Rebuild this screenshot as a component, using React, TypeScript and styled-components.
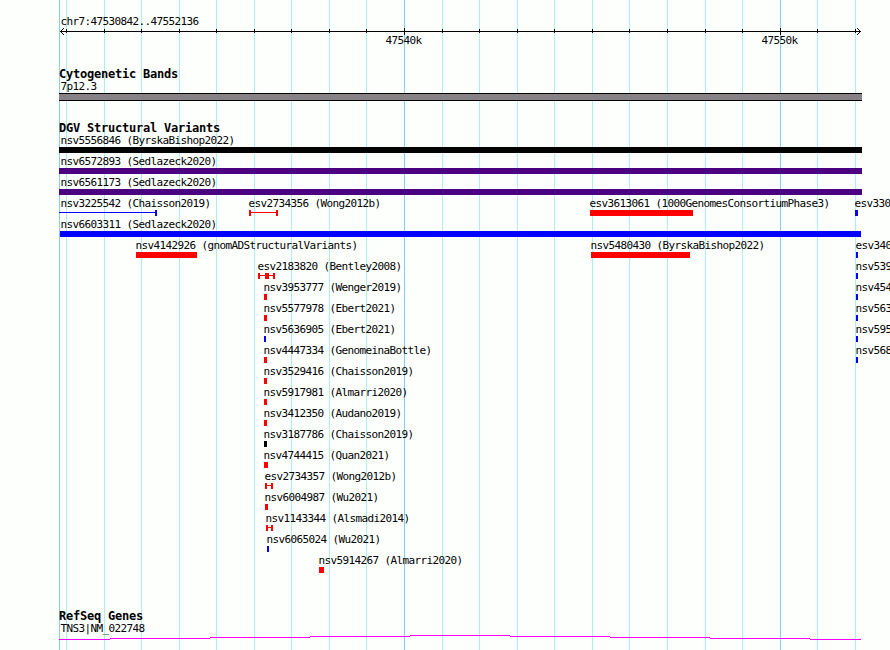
import React from 'react'
import styled, { createGlobalStyle } from 'styled-components'

type Glyph = 'box' | 'span' | 'open'

interface Feature {
  name: string
  start: number
  end: number
  color: string
  glyph?: Glyph
  core?: number
  labelAt?: number
}

const RED = '#ff0000'
const BLUE = '#0000ff'
const INDIGO = '#4b0082'
const BLACK = '#000000'

const minorLines = [
  66, 104, 141, 179, 216, 254, 291, 329, 366, 442, 479,
  517, 554, 592, 629, 667, 705, 742, 817, 855
]
const majorLines = [404, 780]

const lanes: Feature[][] = [
  [{ name: 'nsv5556846 (ByrskaBishop2022)', start: 59, end: 862, color: BLACK, labelAt: 61 }],
  [{ name: 'nsv6572893 (Sedlazeck2020)', start: 59, end: 862, color: INDIGO, labelAt: 61 }],
  [{ name: 'nsv6561173 (Sedlazeck2020)', start: 59, end: 862, color: INDIGO, labelAt: 61 }],
  [
    { name: 'nsv3225542 (Chaisson2019)', start: 59, end: 157, color: BLUE, glyph: 'open', labelAt: 61 },
    { name: 'esv2734356 (Wong2012b)', start: 249, end: 278, color: RED, glyph: 'span' },
    { name: 'esv3613061 (1000GenomesConsortiumPhase3)', start: 590, end: 693, color: RED },
    { name: 'esv330', start: 855, end: 858, color: BLUE }
  ],
  [{ name: 'nsv6603311 (Sedlazeck2020)', start: 60, end: 861, color: BLUE, labelAt: 61 }],
  [
    { name: 'nsv4142926 (gnomADStructuralVariants)', start: 136, end: 197, color: RED },
    { name: 'nsv5480430 (ByrskaBishop2022)', start: 591, end: 690, color: RED },
    { name: 'esv340', start: 856, end: 858, color: BLUE }
  ],
  [
    { name: 'esv2183820 (Bentley2008)', start: 258, end: 275, color: RED, glyph: 'span', core: 4 },
    { name: 'nsv539', start: 856, end: 858, color: BLUE }
  ],
  [
    { name: 'nsv3953777 (Wenger2019)', start: 264, end: 267, color: RED },
    { name: 'nsv454', start: 856, end: 858, color: BLUE }
  ],
  [
    { name: 'nsv5577978 (Ebert2021)', start: 264, end: 267, color: RED },
    { name: 'nsv563', start: 856, end: 858, color: BLUE }
  ],
  [
    { name: 'nsv5636905 (Ebert2021)', start: 264, end: 266, color: BLUE },
    { name: 'nsv595', start: 856, end: 858, color: BLUE }
  ],
  [
    { name: 'nsv4447334 (GenomeinaBottle)', start: 264, end: 267, color: RED },
    { name: 'nsv568', start: 856, end: 858, color: BLUE }
  ],
  [{ name: 'nsv3529416 (Chaisson2019)', start: 264, end: 267, color: RED }],
  [{ name: 'nsv5917981 (Almarri2020)', start: 264, end: 267, color: RED }],
  [{ name: 'nsv3412350 (Audano2019)', start: 264, end: 267, color: RED }],
  [{ name: 'nsv3187786 (Chaisson2019)', start: 264, end: 267, color: BLACK }],
  [{ name: 'nsv4744415 (Quan2021)', start: 264, end: 268, color: RED }],
  [{ name: 'esv2734357 (Wong2012b)', start: 265, end: 273, color: RED, glyph: 'span' }],
  [{ name: 'nsv6004987 (Wu2021)', start: 265, end: 268, color: RED }],
  [{ name: 'nsv1143344 (Alsmadi2014)', start: 266, end: 273, color: RED, glyph: 'span' }],
  [{ name: 'nsv6065024 (Wu2021)', start: 267, end: 269, color: BLUE }],
  [{ name: 'nsv5914267 (Almarri2020)', start: 319, end: 324, color: RED }]
]

const Gridlines = () => (
  <GridSvg width="890" height="650" shapeRendering="crispEdges">
    {minorLines.map(x => <rect key={x} x={x} y="0" width="1" height="650" fill="#afeeee" />)}
    {[59, ...majorLines].map(x => <rect key={x} x={x} y="0" width="1" height="650" fill="#87ceeb" />)}
  </GridSvg>
)

const Scale = () => (
  <ScaleSvg width="890" height="9" shapeRendering="crispEdges">
    <rect x="60" y="4" width="801" height="1" />
    {minorLines.map(x => <rect key={x} x={x} y="2" width="1" height="4" />)}
    {majorLines.map(x => <rect key={x} x={x} y="1" width="1" height="7" />)}
    {[1, 2, 3].map(d => (
      <React.Fragment key={d}>
        <rect x={60 + d} y={4 - d} width="1" height="1" />
        <rect x={60 + d} y={4 + d} width="1" height="1" />
        <rect x={860 - d} y={4 - d} width="1" height="1" />
        <rect x={860 - d} y={4 + d} width="1" height="1" />
      </React.Fragment>
    ))}
  </ScaleSvg>
)

const FeatureGlyph = ({ feature }: { feature: Feature }) => {
  const { start, end, color, glyph = 'box', core } = feature
  if (glyph === 'box') return <Bar $width={end - start} $color={color} />
  return (
    <Span $width={end - start} $color={color}>
      {glyph === 'span' ? <Bar $width={2} $color={color} /> : <i />}
      {core && <Bar $width={core} $color={color} />}
      <Bar $width={2} $color={color} />
    </Span>
  )
}

const App = () => (
  <>
    <GlobalStyle />
    <Browser>
      <Gridlines />
      <Tracks>
        <Ruler>
          <Label $x={60.4}>chr7:47530842..47552136</Label>
          <Scale />
          <ScaleLabels>
            <Label $x={385.4}>47540k</Label>
            <Label $x={761.4}>47550k</Label>
          </ScaleLabels>
        </Ruler>
        <Track $height={54}>
          <Title>Cytogenetic Bands</Title>
          <Label $x={60.4}>7p12.3</Label>
          <Band />
        </Track>
        <Track $height={488}>
          <Title>DGV Structural Variants</Title>
          {lanes.map((lane, key) => (
            <Lane key={key}>
              {lane.map(feature => (
                <FeatureItem key={feature.name} $x={feature.start}>
                  <Label $x={(feature.labelAt ?? feature.start) - feature.start - 0.6}>
                    {feature.name}
                  </Label>
                  <FeatureGlyph feature={feature} />
                </FeatureItem>
              ))}
            </Lane>
          ))}
        </Track>
        <Track $height={40}>
          <Title>RefSeq Genes</Title>
          <Label $x={60.4}>TNS3|NM_022748</Label>
          <GeneSvg width="890" height="5" shapeRendering="crispEdges">
            {[0, 1, 2, 3, 4, 3, 2, 1, 0].map((rise, i) => {
              const from = i === 0 ? 59 : 10 + i * 100
              const to = i === 8 ? 861 : 110 + i * 100
              return <rect key={i} x={from} y={4 - rise} width={to - from} height="1" fill="#ff00ff" />
            })}
          </GeneSvg>
        </Track>
      </Tracks>
    </Browser>
  </>
)

export default App

const GlobalStyle = createGlobalStyle`
  * {
    box-sizing: border-box;
  }
  body {
    margin: 0;
    background: #fdfffc;
    overflow: hidden;
  }
`
const Browser = styled.div`
  display: grid;
  width: 890px;
  height: 650px;
  overflow: hidden;
  color: #000;
  font-family: 'DejaVu Sans Mono', monospace;
`
const GridSvg = styled.svg`
  grid-area: 1 / 1;
  display: block;
`
const Tracks = styled.div`
  grid-area: 1 / 1;
  min-width: 0;
  padding-top: 16px;
`
const Ruler = styled.div`
  height: 52px;
`
const ScaleSvg = styled.svg`
  display: block;
  margin-top: -1px;
`
const ScaleLabels = styled.div`
  display: grid;
  margin-top: -1px;
`
const Label = styled.div<{ $x: number }>`
  grid-area: 1 / 1;
  height: 12px;
  margin-left: ${({ $x }) => $x}px;
  font-size: 11px;
  line-height: 12px;
  letter-spacing: -0.623px;
  white-space: nowrap;
`
const Track = styled.section<{ $height: number }>`
  height: ${({ $height }) => $height}px;
`
const Title = styled.div`
  height: 13px;
  margin-left: 59px;
  font-size: 12px;
  font-weight: 700;
  line-height: 12px;
  letter-spacing: -0.224px;
  white-space: nowrap;
`
const Band = styled.div`
  width: 803px;
  height: 8px;
  margin-left: 59px;
  background: #878286;
  border: solid #000;
  border-width: 1px 0;
`
const Lane = styled.div`
  display: grid;
  height: 21px;
`
const FeatureItem = styled.div<{ $x: number }>`
  grid-area: 1 / 1;
  margin-left: ${({ $x }) => $x}px;
`
const Bar = styled.div<{ $width: number; $color: string }>`
  width: ${({ $width }) => $width}px;
  height: 6px;
  background: ${({ $color }) => $color};
`
const Span = styled.div<{ $width: number; $color: string }>`
  display: flex;
  justify-content: space-between;
  width: ${({ $width }) => $width}px;
  height: 6px;
  background: linear-gradient(${({ $color }) => `${$color}, ${$color}`}) 0 2px / 100% 1px no-repeat;
`
const GeneSvg = styled.svg`
  display: block;
`
